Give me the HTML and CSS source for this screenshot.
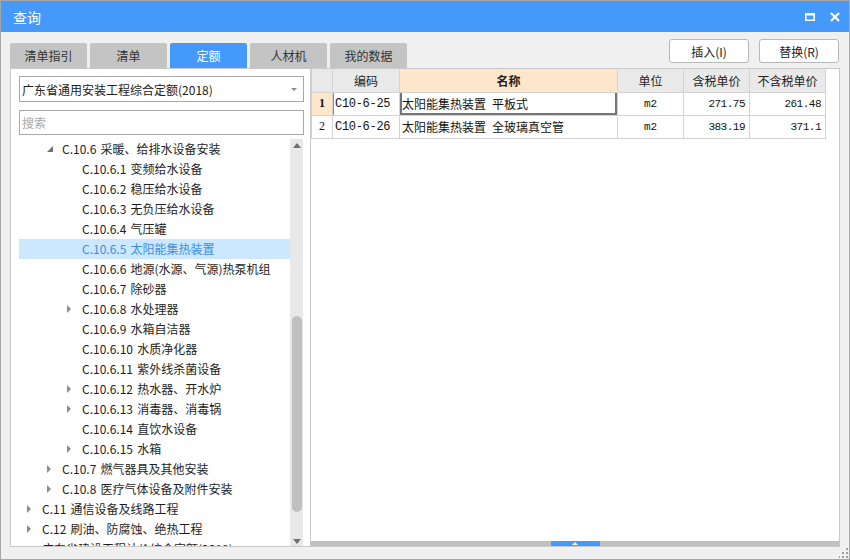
FILE: index.html
```html
<!DOCTYPE html>
<html lang="zh-CN">
<head>
<meta charset="utf-8">
<title>查询</title>
<link rel="stylesheet" href="styles.css">
</head>
<body>
<div class="win">
  <div class="titlebar">
    <span class="title">查询</span>
    <div class="ctrls">
      <svg width="10" height="8" viewBox="0 0 10 8"><path d="M0 0h10v8H0z M1.6 2.6v3.8h6.8V2.6z" fill="#fff" fill-rule="evenodd"/></svg>
      <svg width="10" height="10" viewBox="0 0 10 10"><path d="M1 1L9 9M9 1L1 9" stroke="#fff" stroke-width="2.2"/></svg>
    </div>
  </div>
  <div class="toolbar">
    <div class="tabs">
      <div class="tab">清单指引</div>
      <div class="tab">清单</div>
      <div class="tab on">定额</div>
      <div class="tab">人材机</div>
      <div class="tab">我的数据</div>
    </div>
    <div class="btns">
      <div class="btn">插入(I)</div>
      <div class="btn">替换(R)</div>
    </div>
  </div>
  <div class="main">
    <div class="left">
      <div class="select"><span>广东省通用安装工程综合定额(2018)</span><i class="caret"></i></div>
      <div class="search">搜索</div>
      <div class="treewrap">
        <div class="tree">
          <div class="row l2"><i class="arw open"></i><span>C.10.6 采暖、给排水设备安装</span></div>
          <div class="row l3"><i class="arw none"></i><span>C.10.6.1 变频给水设备</span></div>
          <div class="row l3"><i class="arw none"></i><span>C.10.6.2 稳压给水设备</span></div>
          <div class="row l3"><i class="arw none"></i><span>C.10.6.3 无负压给水设备</span></div>
          <div class="row l3"><i class="arw none"></i><span>C.10.6.4 气压罐</span></div>
          <div class="row l3 sel"><i class="arw none"></i><span>C.10.6.5 太阳能集热装置</span></div>
          <div class="row l3"><i class="arw none"></i><span>C.10.6.6 地源(水源、气源)热泵机组</span></div>
          <div class="row l3"><i class="arw none"></i><span>C.10.6.7 除砂器</span></div>
          <div class="row l3"><i class="arw"></i><span>C.10.6.8 水处理器</span></div>
          <div class="row l3"><i class="arw none"></i><span>C.10.6.9 水箱自洁器</span></div>
          <div class="row l3"><i class="arw none"></i><span>C.10.6.10 水质净化器</span></div>
          <div class="row l3"><i class="arw none"></i><span>C.10.6.11 紫外线杀菌设备</span></div>
          <div class="row l3"><i class="arw"></i><span>C.10.6.12 热水器、开水炉</span></div>
          <div class="row l3"><i class="arw"></i><span>C.10.6.13 消毒器、消毒锅</span></div>
          <div class="row l3"><i class="arw none"></i><span>C.10.6.14 直饮水设备</span></div>
          <div class="row l3"><i class="arw"></i><span>C.10.6.15 水箱</span></div>
          <div class="row l2"><i class="arw"></i><span>C.10.7 燃气器具及其他安装</span></div>
          <div class="row l2"><i class="arw"></i><span>C.10.8 医疗气体设备及附件安装</span></div>
          <div class="row l1"><i class="arw"></i><span>C.11 通信设备及线路工程</span></div>
          <div class="row l1"><i class="arw"></i><span>C.12 刷油、防腐蚀、绝热工程</span></div>
          <div class="row l1"><i class="arw none"></i><span>广东省建设工程计价综合定额(2018)</span></div>
        </div>
        <div class="vs">
          <i class="vs-up"></i>
          <div class="vs-thumb"></div>
          <i class="vs-down"></i>
        </div>
      </div>
    </div>
    <div class="right">
      <div class="grid">
        <table>
          <colgroup>
            <col class="c-num"><col class="c-code"><col class="c-name"><col class="c-unit"><col class="c-tax"><col class="c-notax">
          </colgroup>
          <thead>
            <tr>
              <th></th><th>编码</th><th class="hl">名称</th><th>单位</th><th>含税单价</th><th>不含税单价</th>
            </tr>
          </thead>
          <tbody>
            <tr>
              <td class="num cur-row">1</td>
              <td class="code cur-code">C10-6-25</td>
              <td class="name cur">太阳能集热装置&ensp;平板式</td>
              <td class="unit">m2</td>
              <td class="price">271.75</td>
              <td class="price">261.48</td>
            </tr>
            <tr>
              <td class="num">2</td>
              <td class="code">C10-6-26</td>
              <td class="name">太阳能集热装置&ensp;全玻璃真空管</td>
              <td class="unit">m2</td>
              <td class="price">383.19</td>
              <td class="price">371.1</td>
            </tr>
          </tbody>
        </table>
      </div>
      <div class="hbar"><div class="handle"><i class="handle-tri"></i></div></div>
    </div>
  </div>
  <div class="footer">
    <svg width="10" height="10" viewBox="0 0 10 10" class="grip">
      <rect x="7" y="0" width="2" height="2" fill="#a0a0a0"/>
      <rect x="3" y="4" width="2" height="2" fill="#a0a0a0"/>
      <rect x="7" y="4" width="2" height="2" fill="#a0a0a0"/>
      <rect x="-1" y="8" width="2" height="2" fill="#a0a0a0"/>
      <rect x="3" y="8" width="2" height="2" fill="#a0a0a0"/>
      <rect x="7" y="8" width="2" height="2" fill="#a0a0a0"/>
    </svg>
  </div>
</div>
</body>
</html>
```
FILE: styles.css
```css
* { box-sizing: border-box; }
html, body { margin: 0; padding: 0; }
body {
  width: 850px;
  height: 560px;
  overflow: hidden;
  font-family: "Noto Sans CJK SC", "Noto Sans", sans-serif;
  font-size: 12px;
  color: #1f1f1f;
  background: #f0f0f0;
}
.win {
  width: 850px;
  height: 560px;
  border: 1px solid #a6a6a6;
  display: flex;
  flex-direction: column;
  background: #f0f0f0;
}
.titlebar {
  height: 31px;
  flex: none;
  background: #4499fb;
  display: flex;
  align-items: center;
  padding: 0 9px 0 12px;
  color: #fff;
}
.title { font-size: 14px; flex: 1; }
.ctrls { display: flex; gap: 15px; align-items: center; }
.ctrls svg { display: block; }

.toolbar {
  height: 36px;
  flex: none;
  display: flex;
  justify-content: space-between;
  padding: 0 9px;
}
.tabs { display: flex; gap: 3px; align-self: flex-end; }
.tab {
  width: 77px;
  height: 25px;
  background: #c4c4c4;
  border-radius: 2px 2px 0 0;
  display: flex;
  align-items: center;
  justify-content: center;
  color: #333;
}
.tab.on { background: #4499fb; color: #fff; }
.btns { display: flex; gap: 10px; padding-top: 7px; padding-right: 1px; }
.btn {
  width: 80px;
  height: 24px;
  background: #fff;
  border: 1px solid #b8b8b8;
  border-radius: 3px;
  display: flex;
  align-items: center;
  justify-content: center;
  color: #222;
}

.main {
  height: 479px;
  flex: none;
  display: flex;
  margin: 0 9px;
}
.left {
  width: 300px;
  flex: none;
  border: 1px solid #c9c9c9;
  border-right: none;
  background: #fff;
  padding: 7px 6px 0 8px;
  display: flex;
  flex-direction: column;
  min-height: 0;
}
.select {
  height: 26px;
  flex: none;
  border: 1px solid #a9a9a9;
  display: flex;
  align-items: center;
  justify-content: space-between;
  padding: 0 6px 0 2px;
  color: #222;
}
.caret {
  display: block;
  width: 0;
  height: 0;
  border-top: 3px solid #8a8a8a;
  border-left: 3.5px solid transparent;
  border-right: 3.5px solid transparent;
}
.search {
  height: 25px;
  flex: none;
  margin-top: 8px;
  border: 1px solid #a9a9a9;
  color: #a8a8a8;
  display: flex;
  align-items: center;
  padding-left: 2px;
}
.treewrap {
  flex: 1;
  min-height: 0;
  margin-top: 4px;
  margin-right: 1px;
  display: flex;
  overflow: hidden;
}
.tree { flex: 1; overflow: hidden; }
.row {
  height: 20px;
  line-height: 20px;
  display: flex;
  align-items: center;
  white-space: nowrap;
  color: #1e1e1e;
  word-spacing: 1.5px;
}
.row.l1 { padding-left: 8px; }
.row.l2 { padding-left: 28px; }
.row.l3 { padding-left: 48px; }
.row.sel { background: #cce8ff; color: #3d8de4; }
.arw {
  display: block;
  flex: none;
  width: 15px;
  height: 20px;
  position: relative;
}
.arw::before {
  content: "";
  position: absolute;
  left: 0;
  top: 6px;
  border-left: 4px solid #8c8c8c;
  border-top: 4px solid transparent;
  border-bottom: 4px solid transparent;
}
.arw.none::before { display: none; }
.arw.open::before {
  left: 0;
  top: 7px;
  border: none;
  border-bottom: 6px solid #6f6f6f;
  border-left: 6px solid transparent;
}

.vs {
  width: 13px;
  flex: none;
  background: #e8e8e8;
  display: flex;
  flex-direction: column;
  align-items: center;
}
.vs-up {
  display: block;
  margin-top: 4px;
  width: 0; height: 0;
  border-bottom: 5px solid #707070;
  border-left: 4.5px solid transparent;
  border-right: 4.5px solid transparent;
}
.vs-thumb {
  margin-top: 168px;
  width: 10px;
  height: 196px;
  background: #c0c0c0;
  border-radius: 5px;
}
.vs-down {
  display: block;
  margin-top: 27px;
  width: 0; height: 0;
  border-top: 5px solid #707070;
  border-left: 4.5px solid transparent;
  border-right: 4.5px solid transparent;
}

.right {
  flex: 1;
  border: 1px solid #c9c9c9;
  background: #fff;
  display: flex;
  flex-direction: column;
  min-width: 0;
}
.grid { flex: 1; overflow: hidden; }
table {
  border-collapse: collapse;
  table-layout: fixed;
  width: 514px;
}
.c-num { width: 21px; }
.c-code { width: 67px; }
.c-name { width: 218px; }
.c-unit { width: 66px; }
.c-tax { width: 66px; }
.c-notax { width: 76px; }
th, td {
  border: 1px solid #d3d3d3;
  height: 23px;
  padding: 0;
  white-space: nowrap;
  overflow: hidden;
}
th {
  border-top: none;
  background: #e9e9e9;
  font-weight: normal;
  color: #222;
  text-align: center;
}
th.hl { background: #fde6ca; font-weight: bold; }
td { color: #111; }
td.num {
  font-family: "Liberation Serif", serif;
  font-size: 12px;
  text-align: center;
}
td.cur-row { background: #fde6ca; font-weight: bold; }
td.code {
  font-family: "Liberation Mono", monospace;
  font-size: 12px;
  letter-spacing: -0.3px;
  padding-left: 2px;
}
td.cur-code { box-shadow: inset 1px 0 0 #4499fb; }
td.name { padding-left: 2px; }
td.cur { box-shadow: inset 2px 0 0 #757575, inset -2px 0 0 #757575, inset 0 -2px 0 #757575; }
td.unit {
  font-family: "Liberation Mono", monospace;
  font-size: 11px;
  text-align: center;
}
td.price {
  font-family: "Liberation Mono", monospace;
  font-size: 11px;
  letter-spacing: -0.5px;
  text-align: right;
  padding-right: 4px;
}

.hbar {
  height: 5px;
  flex: none;
  background: #c0c0c0;
  display: flex;
  justify-content: center;
}
.handle {
  width: 49px;
  height: 5px;
  background: #4499fb;
  display: flex;
  justify-content: center;
  align-items: center;
}
.handle-tri {
  display: block;
  width: 0; height: 0;
  border-bottom: 3px solid #fff;
  border-left: 3px solid transparent;
  border-right: 3px solid transparent;
}

.footer {
  height: 12px;
  flex: none;
  display: flex;
  justify-content: flex-end;
  padding: 1px 0 0 0;
}
.grip { display: block; }
```
